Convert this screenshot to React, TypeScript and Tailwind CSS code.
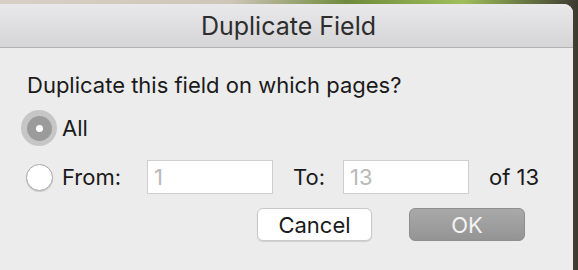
import React from "react";

const font = { fontFamily: '"Inter", "Liberation Sans", sans-serif' };

function Radio({ checked }: { checked?: boolean }) {
  if (checked) {
    return (
      <span className="flex h-[36px] w-[36px] shrink-0 items-center justify-center rounded-full bg-[#c6c6c6]">
        <span className="flex h-[25px] w-[25px] items-center justify-center rounded-full bg-[#9b9b9b]">
          <span className="h-[7px] w-[7px] rounded-full bg-white" />
        </span>
      </span>
    );
  }
  return (
    <span className="flex h-[36px] w-[36px] shrink-0 items-center justify-center">
      <span className="h-[27px] w-[27px] rounded-full border border-[#a8a8a8] bg-white shadow-[0_1px_1px_rgba(0,0,0,0.15)]" />
    </span>
  );
}

function NumberBox({ value }: { value: string }) {
  return (
    <div className="flex h-[34px] w-[126px] shrink-0 items-center border border-[#cfcfcf] bg-white pl-[6px] text-[22px] text-[#b9b9b9]">
      {value}
    </div>
  );
}

export default function App() {
  return (
    <div
      className="flex h-[270px] w-[578px] flex-col overflow-hidden bg-[linear-gradient(90deg,#d9cfc4_0%,#cfc5b8_40%,#6e8a3c_60%,#9fbf5a_80%,#3d3a30_100%)]"
      style={font}
    >
      <div className="mt-[4px] flex w-[573px] flex-1 flex-col overflow-hidden rounded-tr-[9px] bg-[#ececec]">
        <div className="flex h-[44px] items-center justify-center border-b border-[#b4b4b4] bg-[linear-gradient(180deg,#e9e8ea,#d5d4d6)] pl-[4px] pt-[3px] text-[25px] text-[#2d2d2d]">
          Duplicate Field
        </div>
        <div className="flex flex-col pl-[21px] pr-[48px] text-[22px] leading-[26px] text-[#1a1a1a]">
          <div className="mt-[24px] whitespace-nowrap pl-[6px]">
            Duplicate this field on which pages?
          </div>
          <div className="mt-[12px] flex items-center gap-[5px]">
            <Radio checked />
            <span>All</span>
          </div>
          <div className="mt-[13px] flex items-center whitespace-nowrap">
            <Radio />
            <span className="ml-[5px] w-[85px] shrink-0">From:</span>
            <NumberBox value="1" />
            <span className="ml-[20px] w-[50px] shrink-0">To:</span>
            <NumberBox value="13" />
            <span className="ml-[20px] shrink-0">of 13</span>
          </div>
          <div className="mt-[13px] flex justify-end gap-[37px]">
            <button className="h-[33px] w-[115px] rounded-[6px] border border-[#c9c9c9] bg-white text-[22px] text-[#1a1a1a] shadow-[0_1px_1px_rgba(0,0,0,0.12)]">
              Cancel
            </button>
            <button className="h-[33px] w-[116px] rounded-[6px] border border-[#8e8e8e] bg-[linear-gradient(180deg,#a9a9a9,#949494)] text-[22px] text-[#f3f3f3]">
              OK
            </button>
          </div>
        </div>
      </div>
    </div>
  );
}
